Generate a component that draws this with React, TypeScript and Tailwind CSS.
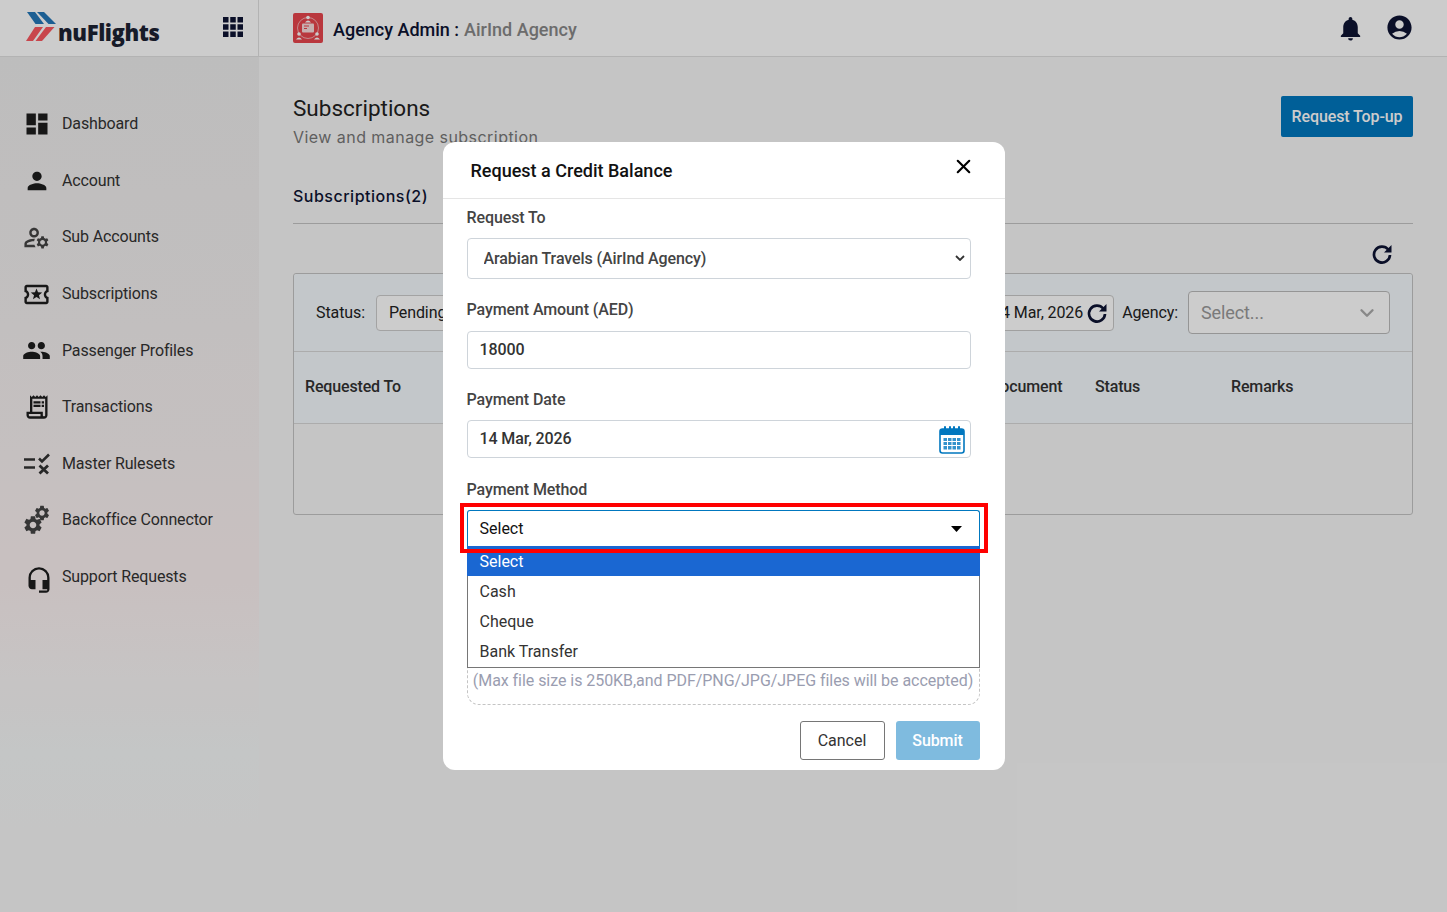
import { ChevronDown, X } from 'lucide-react';
import {
  MdAccountCircle,
  MdDashboard,
  MdHeadsetMic,
  MdNotifications,
  MdOutlineLocalActivity,
  MdOutlineManageAccounts,
  MdOutlineReceiptLong,
  MdPeople,
  MdPerson,
  MdSettings,
} from 'react-icons/md';

function RefreshIcon({ className }: { className: string }) {
  return (
    <svg viewBox="0 0 24 24" className={`text-[#0d1333] ${className}`} fill="none">
      <path d="M18.200 7.500A8 8 0 1 0 20 13" stroke="currentColor" strokeWidth="2.700" />
      <path d="M21.500 3v7.500H14z" fill="currentColor" />
    </svg>
  );
}

function RulesIcon() {
  return (
    <svg viewBox="0 0 28 24" className="w-[28px] h-[25px] translate-x-[1px] text-[#333]" fill="none" stroke="currentColor" strokeWidth="2.600">
      <path d="M0 8h11M0 16h11" />
      <path d="M15 7l3 3 7-7" />
      <path d="M15.500 14l8.500 8M24 14l-8.500 8" strokeWidth="2.800" />
    </svg>
  );
}

function GearsIcon() {
  return (
    <span className="relative block w-[31px] h-[32px] text-[#444]">
      <MdSettings className="absolute left-0 bottom-0 text-[22px]" />
      <MdSettings className="absolute right-0 top-0 text-[18px]" />
    </span>
  );
}

function AppsGrid() {
  return (
    <svg viewBox="0 0 20 20" className="w-[20px] h-[20px] -mt-[3px] text-[#0d1333]" fill="currentColor">
      <rect x="0" y="0" width="5.500" height="5.500" />
      <rect x="7.250" y="0" width="5.500" height="5.500" />
      <rect x="14.500" y="0" width="5.500" height="5.500" />
      <rect x="0" y="7.250" width="5.500" height="5.500" />
      <rect x="7.250" y="7.250" width="5.500" height="5.500" />
      <rect x="14.500" y="7.250" width="5.500" height="5.500" />
      <rect x="0" y="14.500" width="5.500" height="5.500" />
      <rect x="7.250" y="14.500" width="5.500" height="5.500" />
      <rect x="14.500" y="14.500" width="5.500" height="5.500" />
    </svg>
  );
}

const menu = [
  { label: 'Dashboard', icon: <MdDashboard className="text-[28px]" /> },
  { label: 'Account', icon: <MdPerson className="text-[28px]" /> },
  { label: 'Sub Accounts', icon: <MdOutlineManageAccounts className="text-[31px] text-[#444]" /> },
  { label: 'Subscriptions', icon: <MdOutlineLocalActivity className="text-[33px]" /> },
  { label: 'Passenger Profiles', icon: <MdPeople className="text-[31px]" /> },
  { label: 'Transactions', icon: <MdOutlineReceiptLong className="text-[28px]" /> },
  { label: 'Master Rulesets', icon: <RulesIcon /> },
  { label: 'Backoffice Connector', icon: <GearsIcon /> },
  { label: 'Support Requests', icon: <MdHeadsetMic className="text-[28px] translate-x-[2px] translate-y-[3px]" /> },
];

function Logo() {
  return (
    <div className="flex items-end">
      <svg viewBox="0 0 32 32" className="w-[32px] h-[32px] mb-[3px]">
        <path d="M1 1h8l9 12H9.500z" fill="#2377b8" />
        <path d="M11 1h7l12 12h-7.500z" fill="#2377b8" />
        <path d="M9 16h8L7 30H0z" fill="#fa5860" />
        <path d="M20 16h8.500L16 30H9.500z" fill="#fa5860" />
      </svg>
      <span className="text-[22px] leading-[28px] font-extrabold text-[#1c2233] tracking-[-0.4px] font-['Open_Sans',sans-serif]">
        nuFlights
      </span>
    </div>
  );
}

function AgencyIcon() {
  return (
    <svg viewBox="0 0 30 30" className="w-[30px] h-[30px]">
      <rect width="30" height="30" rx="2" fill="#e8454d" />
      <circle cx="15" cy="15" r="10.500" fill="none" stroke="#f6c6c8" strokeWidth="0.800" />
      <rect x="9" y="10.500" width="12" height="9" rx="1" fill="#f9dcdd" />
      <path d="M11 13h5M11 15.500h3" stroke="#e8454d" strokeWidth="1" />
      <circle cx="15" cy="4.500" r="1.800" fill="#fff" />
      <path d="M12 9.500q3-4 6 0z" fill="#fff" />
      <circle cx="6" cy="21" r="1.800" fill="#fff" />
      <path d="M3 26.500q3-4 6 0z" fill="#fff" />
      <circle cx="24" cy="21" r="1.800" fill="#fff" />
      <path d="M21 26.500q3-4 6 0z" fill="#fff" />
    </svg>
  );
}

function CalendarIcon() {
  return (
    <svg viewBox="0 0 26 29" className="w-[26px] h-[29px] text-[#0077bf]">
      <rect x="1" y="4" width="24" height="24" rx="2.500" fill="#fff" stroke="currentColor" strokeWidth="1.600" />
      <rect x="1" y="4" width="24" height="6" fill="currentColor" />
      <path d="M6 6V2M11 6V2M15 6V2M20 6V2" stroke="currentColor" strokeWidth="2" strokeLinecap="round" />
      <path d="M4.500 13h17v11.500h-17z" fill="currentColor" opacity="0.8" />
      <path d="M4 16.500h18M4 20.500h18M8.500 12v13M13 12v13M17.500 12v13" stroke="#fff" strokeWidth="1" />
    </svg>
  );
}

function FieldLabel({ children, className }: { children: string; className: string }) {
  return (
    <div className={`h-[21px] leading-[21px] text-base font-medium tracking-[-0.1px] text-[#444] ${className}`}>{children}</div>
  );
}

function PaymentMethod() {
  return (
    <div className="relative mt-[10px] w-[513px] h-[36px]">
      <div className="flex items-center justify-between h-full pl-3 pr-[17px] bg-white border border-[#0077bf] border-b-0 rounded-t-[3px] text-base text-[#111]">
        <span>Select</span>
        <svg viewBox="0 0 11 6" className="w-[11px] h-[6px]">
          <path d="M0 0h11L5.500 6z" fill="#000" />
        </svg>
      </div>
      <ul className="absolute left-0 top-full z-10 w-full h-[122px] bg-white border border-[#767676] border-t-0 text-base text-[#333]">
        <li className="h-[30px] leading-[31px] pl-[13px] -mx-[1px] bg-[#1a67d2] text-white">Select</li>
        <li className="h-[30px] leading-[31px] px-3">Cash</li>
        <li className="h-[30px] leading-[31px] px-3">Cheque</li>
        <li className="h-[30px] leading-[31px] px-3">Bank Transfer</li>
      </ul>
      <div className="absolute -left-[7px] -right-[8px] -top-[7px] -bottom-[7px] z-20 border-4 border-[#ff0000] pointer-events-none" />
    </div>
  );
}

function CreditModal() {
  return (
    <div className="w-[562px] h-[628px] bg-white rounded-xl">
      <div className="flex items-start justify-between h-[57px] pl-7 pr-[30px] border-b border-[#e5e5e5]">
        <h2 className="mt-[15px] text-lg leading-[27px] font-medium text-[#111]">Request a Credit Balance</h2>
        <X className="mt-[13px] w-[23px] h-[23px] text-black" strokeWidth={2.2} />
      </div>
      <div className="pl-6">
        <FieldLabel className="mt-2">Request To</FieldLabel>
        <div className="relative mt-[10px] w-[504px]">
          <select
            defaultValue="arabian"
            className="block w-full h-[41px] pl-4 appearance-none bg-white border border-[#ced4da] rounded text-base font-medium tracking-[-0.1px] text-[#444] outline-none"
          >
            <option value="arabian">Arabian Travels (AirInd Agency)</option>
          </select>
          <svg viewBox="0 0 10 6" className="absolute right-[6px] top-[17px] w-[10px] h-[6px] text-[#333]" fill="none" stroke="currentColor" strokeWidth="1.800">
            <path d="M1 1l4 4 4-4" />
          </svg>
        </div>
        <FieldLabel className="mt-5">Payment Amount (AED)</FieldLabel>
        <input
          defaultValue="18000"
          className="block mt-[11px] w-[504px] h-[38px] px-3 pb-[2px] bg-white border border-[#ced4da] rounded text-base font-medium tracking-[-0.1px] text-[#333] outline-none"
        />
        <FieldLabel className="mt-5">Payment Date</FieldLabel>
        <div className="flex items-center justify-between mt-[10px] w-[504px] h-[38px] pl-3 pr-[5px] bg-white border border-[#ced4da] rounded text-base font-medium tracking-[-0.1px] text-[#333]">
          <span>14 Mar, 2026</span>
          <CalendarIcon />
        </div>
        <FieldLabel className="mt-[21px]">Payment Method</FieldLabel>
        <PaymentMethod />
        <div className="flex items-end justify-center mt-[53px] w-[513px] h-[106px] pb-[11px] border border-dashed border-[#c4c4c4] rounded-xl text-base tracking-[-0.05px] text-[#9a9db0]">
          (Max file size is 250KB,and PDF/PNG/JPG/JPEG files will be accepted)
        </div>
        <div className="flex justify-end gap-[11px] mt-4 w-[513px]">
          <button className="w-[85px] h-[39px] bg-white border border-[#767676] rounded-[3px] text-base text-[#333]">Cancel</button>
          <button className="w-[84px] h-[39px] bg-[#7fbbdf] rounded-[3px] text-base font-medium tracking-[-0.1px] text-white">Submit</button>
        </div>
      </div>
    </div>
  );
}

export default function App() {
  return (
    <div className="relative h-[912px] overflow-hidden bg-[#f7f7f7] font-['Roboto',sans-serif]">
      <header className="flex items-center h-[57px] bg-white border-b border-[#e0e0e0]">
        <div className="flex items-center justify-between w-[259px] h-full pl-[26px] pr-[15px] border-r border-[#e0e0e0]">
          <Logo />
          <AppsGrid />
        </div>
        <div className="flex items-center flex-1 pl-[34px] pr-[33px]">
          <AgencyIcon />
          <span className="ml-[10px] mt-[3px] text-lg font-medium text-[#0d1333]">Agency Admin :</span>
          <span className="ml-[5px] mt-[3px] text-lg font-medium text-[#888]">AirInd Agency</span>
          <MdNotifications className="ml-auto text-[29px] text-[#0d1333]" />
          <MdAccountCircle className="ml-[20px] text-[29px] text-[#0d1333] -translate-y-[1px]" />
        </div>
      </header>

      <div className="flex">
        <aside className="w-[259px] h-[773px] pt-[39px] bg-[linear-gradient(180deg,#ededed_0%,#f3efef_35%,#fbf1f1_68%,#f6f8f8_90%,#f7f7f7_100%)]">
          {menu.map((item) => (
            <div key={item.label} className="flex items-center h-[56.600px] text-base tracking-[-0.15px] text-[#333]">
              <span className="flex items-center justify-center w-[29px] ml-[22px] text-[#1d1d1d]">{item.icon}</span>
              <span className="ml-[11px]">{item.label}</span>
            </div>
          ))}
        </aside>

        <main className="flex-1 pl-[34px] pr-[34px]">
          <div className="flex items-start justify-between pt-[39px]">
            <div>
              <h1 className="-mt-[1px] text-[22.500px] leading-[26px] text-[#222]">Subscriptions</h1>
              <p className="mt-[4px] text-[16px] leading-[24px] tracking-[0.45px] text-[#777] font-['Inter',sans-serif]">
                View and manage subscription
              </p>
            </div>
            <button className="w-[132px] h-[41px] bg-[#0077bf] rounded-[2px] text-base font-medium tracking-[-0.1px] text-white">
              Request Top-up
            </button>
          </div>
          <div className="flex items-end h-[75px] pb-[15px] border-b border-[#c4c4c4]">
            <span className="text-[16px] leading-[24px] font-medium tracking-[0.5px] text-[#0d1333] font-['Inter',sans-serif]">
              Subscriptions(2)
            </span>
          </div>
          <div className="flex justify-end h-[49px] pt-[18px] pr-[19px]">
            <RefreshIcon className="w-[24px] h-[24px]" />
          </div>
          <section className="h-[242px] border border-[#c4c4c4] rounded-[3px]">
            <div className="flex items-center h-[78px] pl-[22px] pr-[22px] bg-[#f4f9fd] border-b border-[#d8d8d8] rounded-t-[3px] tracking-[-0.1px]">
              <span className="text-base text-[#222]">Status:</span>
              <select defaultValue="pending" className="ml-[11px] w-[120px] h-[36px] pl-2 bg-[#fff] border border-[#ccc] rounded text-base text-[#222]">
                <option value="pending">Pending</option>
              </select>
              <div className="flex items-center justify-end ml-auto w-[260px] h-[36px] pr-[4px] bg-white border border-[#c8c8c8] rounded text-base text-[#222]">
                <span>1 Jan, 2026 - 14 Mar, 2026</span>
                <RefreshIcon className="ml-[2px] w-[24px] h-[24px]" />
              </div>
              <span className="ml-[8px] text-base text-[#222]">Agency:</span>
              <div className="flex items-center justify-between ml-[10px] w-[202px] h-[43px] pl-3 pr-[11px] bg-white border border-[#bbb] rounded text-lg text-[#999]">
                <span>Select...</span>
                <ChevronDown className="w-[22px] h-[22px] text-[#aaa]" strokeWidth={2.6} />
              </div>
            </div>
            <div className="flex items-center h-[72px] pl-[11px] pb-[2px] bg-[#f4f9fd] border-b border-[#d8d8d8] text-base font-medium tracking-[-0.15px] text-[#333]">
              <span className="w-[685px]">Requested To</span>
              <span className="w-[105px]">Document</span>
              <span className="w-[136px]">Status</span>
              <span>Remarks</span>
            </div>
          </section>
        </main>
      </div>

      <div className="absolute inset-0 flex justify-center pt-[142px] bg-black/20">
        <CreditModal />
      </div>
    </div>
  );
}
